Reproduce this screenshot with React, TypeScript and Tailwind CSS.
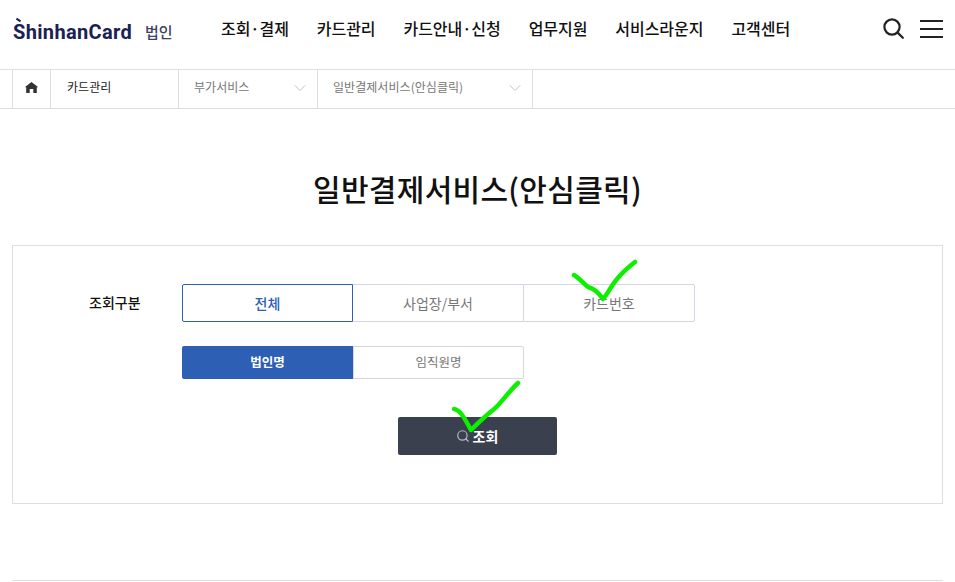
import { ChevronDown, Search } from "lucide-react";

const KR = "font-['Noto_Sans_CJK_KR','Noto_Sans',sans-serif]";

const NAV = ["조회·결제", "카드관리", "카드안내·신청", "업무지원", "서비스라운지", "고객센터"];

function Header() {
  return (
    <header className="h-[70px] border-b border-[#dedede] flex items-center pl-[13px] pr-[12px]">
      <div className="flex items-center w-[208px] shrink-0 pb-[6px]">
        <span className="relative font-['Roboto',sans-serif] font-bold text-[20px] leading-none tracking-[0.35px] text-[#1b2150] w-[132px]">
          ShinhanCard
          <span className="absolute left-[3px] top-[-3px] w-[5px] h-[2px] bg-[#1b2150] rotate-[35deg]" />
        </span>
        <span className="text-[15px] font-medium leading-none text-[#3c4268]">법인</span>
      </div>
      <nav className="flex gap-[28px] text-[16px] font-medium tracking-[-0.05px] text-[#111] leading-none pb-[14px]">
        {NAV.map((n) => (
          <a key={n}>{n}</a>
        ))}
      </nav>
      <div className="ml-auto flex items-center gap-[16px] pb-[12px]">
        <svg width="21" height="21" viewBox="0 0 21 21" fill="none" stroke="#222" strokeWidth="2.2">
          <circle cx="9" cy="9" r="7.6" />
          <path d="M14.6 14.6 L19.8 19.8" strokeLinecap="round" />
        </svg>
        <div className="flex flex-col gap-[6px] w-[23px]">
          <span className="h-[2px] bg-[#222]" />
          <span className="h-[2px] bg-[#222]" />
          <span className="h-[2px] bg-[#222]" />
        </div>
      </div>
    </header>
  );
}

function Crumb({ label, className }: { label: string; className: string }) {
  return (
    <div className={`h-full border-r border-[#dedede] flex items-center justify-between pl-[15px] pr-[7px] text-[12px] tracking-[0.05px] text-[#777] ${className}`}>
      <span className="pb-[4px]">{label}</span>
      <ChevronDown size={20} strokeWidth={1.1} className="text-[#bbb] mb-[2px]" />
    </div>
  );
}

function Breadcrumb() {
  return (
    <div className="h-[39px] border-b border-[#dedede] pl-[12px] flex items-center">
      <div className="h-full w-[39px] border-x border-[#dedede] flex items-center justify-center pb-[3px]">
        <svg width="13" height="11" viewBox="0 0 13 11" fill="#333">
          <path d="M6.5 0 L13 5 L11.8 5.6 V11 H8.3 V7 H4.7 V11 H1.2 V5.6 L0 5 Z" />
        </svg>
      </div>
      <div className="h-full w-[128px] border-r border-[#dedede] flex items-center pl-[16px] text-[12px] tracking-[0.05px] text-[#222]">
        <span className="pb-[4px]">카드관리</span>
      </div>
      <Crumb label="부가서비스" className="w-[139px]" />
      <Crumb label="일반결제서비스(안심클릭)" className="w-[215px]" />
    </div>
  );
}

function CheckMark({ className, d, w, h }: { className: string; d: string; w: number; h: number }) {
  return (
    <svg className={`absolute ${className}`} width={w} height={h} viewBox={`0 0 ${w} ${h}`} fill="none">
      <path d={d} stroke="#0cf000" strokeWidth="4.5" strokeLinecap="round" strokeLinejoin="round" />
    </svg>
  );
}

function Filter() {
  return (
    <section className="relative mx-[12px] h-[259px] border border-[#dedede] pt-[38px]">
      <div className="flex">
        <div className="w-[169px] pl-[76px] h-[38px] flex items-center text-[14px] font-medium text-[#111] pb-[2px]">
          조회구분
        </div>
        <div>
          <div className="flex h-[38px] w-[513px] text-[14px] text-[#777]">
            <button className="w-[171px] border border-[#2d5fb5] rounded-l-[2px] text-[#2d5fb5] font-medium">전체</button>
            <button className="w-[170px] border-y border-[#d5d5e3]">사업장/부서</button>
            <button className="w-[172px] border border-[#d5d5e3] rounded-r-[2px]">카드번호</button>
          </div>
          <div className="flex h-[33px] w-[342px] mt-[24px] text-[12.5px] text-[#777]">
            <button className="w-[171px] bg-[#2d5fb5] rounded-l-[2px] text-white font-bold">법인명</button>
            <button className="w-[171px] border border-[#d5d5e3] rounded-r-[2px]">임직원명</button>
          </div>
        </div>
      </div>
      <div className="flex justify-center mt-[38px] pr-[1px]">
        <button className="w-[159px] h-[38px] bg-[#3a404e] rounded-[2px] flex items-center justify-center gap-[3px] text-[14px] font-bold text-white">
          <Search size={14} strokeWidth={2} className="text-[#b9bcc4]" />
          조회
        </button>
      </div>
      <CheckMark
        className="left-[558px] top-[13px]"
        w={68}
        h={44}
        d="M3 16 C8 19 12 24 17 28 C22 29 27 33 32 40 C36 36 40 27 46 20 C50 15 55 10 64 3"
      />
      <CheckMark
        className="left-[438px] top-[134px]"
        w={72}
        h={56}
        d="M3 29 C9 30 13 37 20 50 C26 44 33 37 42 30 C50 24 56 13 67 3"
      />
    </section>
  );
}

export default function App() {
  return (
    <div className={`h-[582px] overflow-hidden bg-white ${KR}`}>
      <Header />
      <Breadcrumb />
      <h1 className="h-[136px] pt-[57px] text-center text-[30px] tracking-[0.3px] leading-[44px] font-medium text-[#111]">
        일반결제서비스(안심클릭)
      </h1>
      <Filter />
      <div className="mx-[12px] mt-[76px] border-t border-[#dedede]" />
    </div>
  );
}
